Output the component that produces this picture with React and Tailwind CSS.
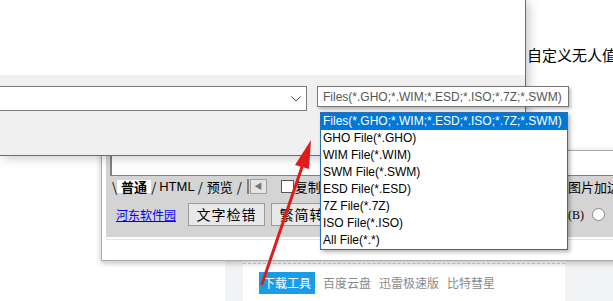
import React from "react";

const fileTypes = [
  "Files(*.GHO;*.WIM;*.ESD;*.ISO;*.7Z;*.SWM)",
  "GHO File(*.GHO)",
  "WIM File(*.WIM)",
  "SWM File(*.SWM)",
  "ESD File(*.ESD)",
  "7Z File(*.7Z)",
  "ISO File(*.ISO)",
  "All File(*.*)",
];

const Arrow = () => (
  <svg className="absolute inset-0 pointer-events-none" width="613" height="301">
    <line x1="262" y1="284" x2="303" y2="164" stroke="#e01b1b" strokeWidth="3" strokeLinecap="round" />
    <polygon points="311,140 295,165 309,169" fill="#e01b1b" />
  </svg>
);

const EditorWindow = () => (
  <div className="absolute left-[101px] top-[150px] w-[540px] h-[111px] bg-white border border-[#a9a9a9] shadow-[0_2px_6px_rgba(0,0,0,0.25)] pl-[4px] flex flex-col font-['Noto_Sans_CJK_SC',sans-serif]">
    <div className="bg-[#d4d4d4] h-[86px] pl-[4px] flex flex-col">
      <div className="h-[25px] bg-white border-l-2 border-b border-[#808080]" />
      <div className="flex items-center h-[16px] mt-[2px] text-[13px] leading-none text-black">
        <span className="ml-[2px]">\</span>
        <span className="bg-white px-[4px] font-bold">普通</span>
        <span>/</span>
        <span className="px-[3px] font-['Liberation_Sans',sans-serif]">HTML</span>
        <span>/</span>
        <span className="px-[4px]">预览</span>
        <span>/</span>
        <span className="ml-[5px] w-[2px] h-[15px] bg-[#808080]" />
        <span className="ml-[1px] w-[17px] h-[15px] bg-[#e4e4e4] border border-[#a0a0a0] flex items-center justify-center text-[8px] text-[#777]">◀</span>
        <span className="ml-[14px] w-[13px] h-[13px] bg-white border border-[#555]" />
        <span className="ml-[1px] whitespace-nowrap">复制</span>
        <span className="ml-[247px] whitespace-nowrap">图片加边框</span>
      </div>
      <div className="flex items-center mt-[9px] h-[23px]">
        <a className="ml-[6px] text-[12px] text-[#0000ee] underline leading-none">河东软件园</a>
        <button className="ml-[12px] w-[77px] h-[23px] bg-[#e8e8e8] border border-[#9a9a9a] text-[14px] tracking-[1px] text-black">文字检错</button>
        <button className="ml-[6px] w-[77px] h-[23px] bg-[#e8e8e8] border border-[#9a9a9a] text-[14px] tracking-[1px] text-black">繁简转换</button>
        <span className="ml-[220px] text-[12px] font-['Liberation_Serif',serif]">(B)</span>
        <span className="ml-[8px] w-[13px] h-[13px] rounded-full bg-white border border-[#888]" />
      </div>
    </div>
    <div className="mt-[2px] border-t border-[#e6e6e6] flex-1 bg-white" />
  </div>
);

const Dialog = () => (
  <div className="absolute left-0 top-0 w-[526px] h-[156px] border-r border-b border-[#3a78b4] shadow-[3px_2px_10px_rgba(0,0,0,0.22)] flex flex-col bg-white">
    <div className="h-[75px] bg-white" />
    <div className="flex-1 bg-[#f0f0f0] pt-[11px] flex">
      <div className="-ml-[2px] w-[309px] h-[25px] bg-white border border-[#7a7a7a] flex items-center justify-end pr-[5px]">
        <svg width="10" height="6" viewBox="0 0 10 6">
          <polyline points="0.5,0.5 5,5 9.5,0.5" fill="none" stroke="#444" strokeWidth="1" />
        </svg>
      </div>
    </div>
  </div>
);

const Dropdown = () => (
  <>
    <div className="absolute left-[317px] top-[86px] w-[252px] h-[21px] bg-white border border-[#767676] shadow-[2px_2px_3px_rgba(0,0,0,0.25)] flex items-center pl-[5px] text-[12px] text-[#555] whitespace-nowrap font-['Liberation_Sans',sans-serif]">
      {fileTypes[0]}
    </div>
    <ul className="absolute left-[320px] top-[112px] w-[248px] bg-white border border-[#2a6fb5] shadow-[2px_2px_4px_rgba(0,0,0,0.3)] font-['Liberation_Sans',sans-serif] text-[12px] text-black">
      {fileTypes.map((t, i) => (
        <li
          key={t}
          className={
            i === 0
              ? "h-[17px] leading-[17px] pl-[2px] whitespace-nowrap bg-[#0078d7] text-white"
              : "h-[17px] leading-[17px] pl-[2px] whitespace-nowrap"
          }
        >
          {t}
        </li>
      ))}
    </ul>
  </>
);

export default function App() {
  return (
    <div className="relative w-[613px] h-[301px] overflow-hidden bg-white font-['Noto_Sans_CJK_SC',sans-serif]">
      <p className="absolute left-[527px] top-[46px] text-[15px] leading-[18px] whitespace-nowrap text-black">
        自定义无人值守
      </p>

      <div className="absolute left-[225px] top-[260px] w-[400px] h-[41px] bg-[#f2f3f5] flex">
        <div className="ml-[18px] w-[322px] bg-white flex flex-col">
          <div className="mt-[3px] border-t border-dashed border-[#cfcfcf]" />
          <div className="flex items-center mt-[8px] ml-[16px] gap-2 text-[12px]">
            <span className="bg-[#1b9de6] text-white px-[4px] h-[22px] leading-[22px]">下载工具</span>
            <span className="text-[#8a8a8a]">百度云盘</span>
            <span className="text-[#8a8a8a]">迅雷极速版</span>
            <span className="text-[#8a8a8a]">比特彗星</span>
          </div>
        </div>
      </div>

      <EditorWindow />
      <Dialog />
      <Dropdown />
      <Arrow />
    </div>
  );
}
